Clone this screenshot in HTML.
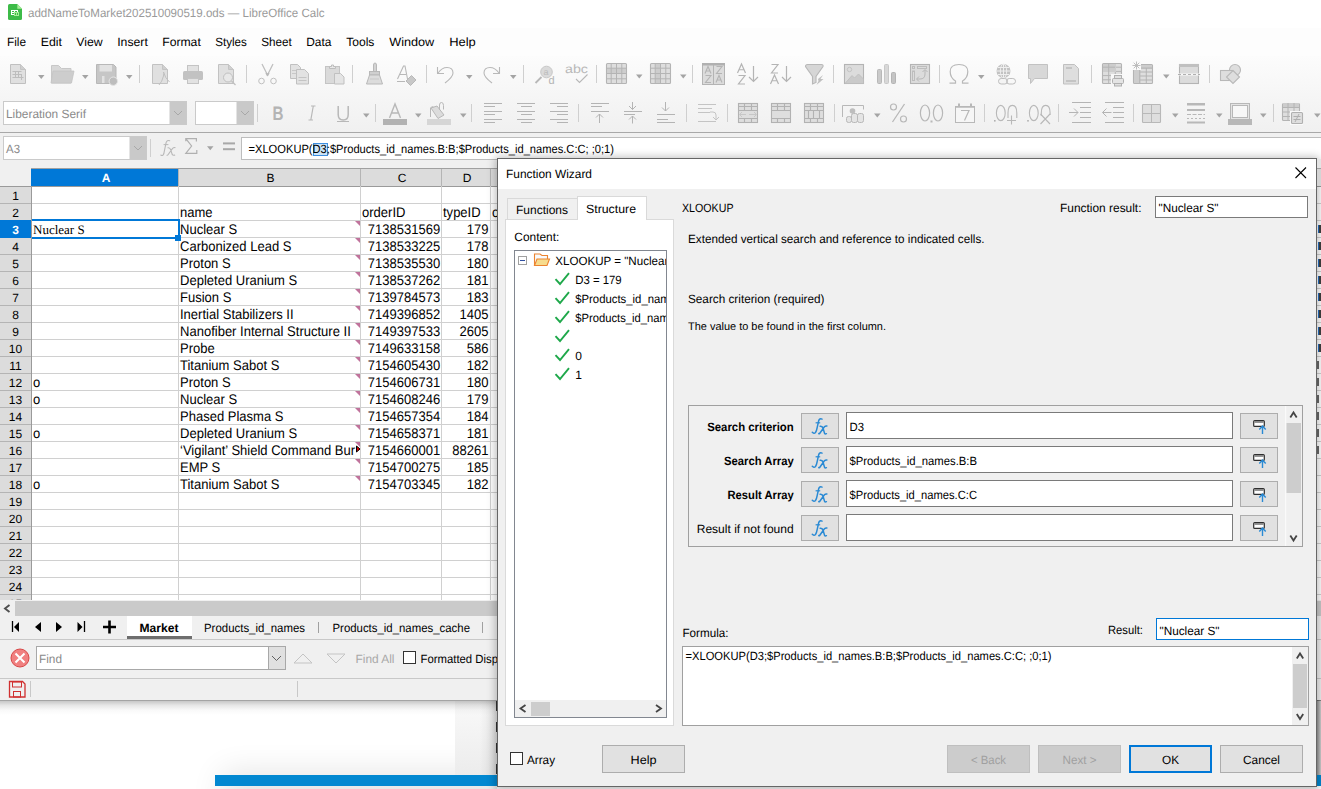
<!DOCTYPE html>
<html><head><meta charset="utf-8"><title>LibreOffice Calc - Function Wizard</title>
<style>html,body{margin:0;padding:0;width:1321px;height:789px;overflow:hidden;background:#fff}svg{display:block}</style>
</head><body><svg width="1321" height="789" viewBox="0 0 1321 789" text-rendering="geometricPrecision"><rect x="0" y="0" width="1321" height="789" fill="#ffffff" />
<rect x="0" y="0" width="1321" height="28" fill="#ffffff" />
<path d="M8 5.5 Q8 4 9.5 4 L17.3 4 L22 8.7 L22 18.5 Q22 20 20.5 20 L9.5 20 Q8 20 8 18.5 Z" fill="#3dbb48"/>
<path d="M17.3 4 L22 8.7 L17.3 8.7 Z" fill="#a8ee98"/>
<rect x="11" y="10" width="7" height="5" fill="#ffffff"/><rect x="12" y="11" width="2" height="1" fill="#3dbb48"/><rect x="15" y="11" width="2" height="1" fill="#3dbb48"/><rect x="12" y="13" width="2" height="1" fill="#3dbb48"/>
<rect x="14" y="12" width="5" height="4" fill="#a8ee98"/><rect x="15" y="13" width="1" height="2" fill="#3dbb48"/><rect x="17" y="13" width="1" height="2" fill="#3dbb48"/>
<text x="28" y="17" font-family="Liberation Sans" font-size="12" fill="#9a9a9a" textLength="296.5" lengthAdjust="spacingAndGlyphs" >addNameToMarket202510090519.ods — LibreOffice Calc</text>
<rect x="0" y="28" width="1321" height="28" fill="#fdfdfd" />
<text x="6.9" y="46" font-family="Liberation Sans" font-size="12" fill="#000" textLength="19.1" lengthAdjust="spacingAndGlyphs" >File</text>
<text x="40.800000000000004" y="46" font-family="Liberation Sans" font-size="12" fill="#000" textLength="21.200000000000003" lengthAdjust="spacingAndGlyphs" >Edit</text>
<text x="76.2" y="46" font-family="Liberation Sans" font-size="12" fill="#000" textLength="26.400000000000002" lengthAdjust="spacingAndGlyphs" >View</text>
<text x="117.2" y="46" font-family="Liberation Sans" font-size="12" fill="#000" textLength="30.6" lengthAdjust="spacingAndGlyphs" >Insert</text>
<text x="162.2" y="46" font-family="Liberation Sans" font-size="12" fill="#000" textLength="38.6" lengthAdjust="spacingAndGlyphs" >Format</text>
<text x="215.2" y="46" font-family="Liberation Sans" font-size="12" fill="#000" textLength="31.6" lengthAdjust="spacingAndGlyphs" >Styles</text>
<text x="261.2" y="46" font-family="Liberation Sans" font-size="12" fill="#000" textLength="30.6" lengthAdjust="spacingAndGlyphs" >Sheet</text>
<text x="306.2" y="46" font-family="Liberation Sans" font-size="12" fill="#000" textLength="25.200000000000003" lengthAdjust="spacingAndGlyphs" >Data</text>
<text x="346.2" y="46" font-family="Liberation Sans" font-size="12" fill="#000" textLength="28.200000000000003" lengthAdjust="spacingAndGlyphs" >Tools</text>
<text x="389.2" y="46" font-family="Liberation Sans" font-size="12" fill="#000" textLength="45.1" lengthAdjust="spacingAndGlyphs" >Window</text>
<text x="449.2" y="46" font-family="Liberation Sans" font-size="12" fill="#000" textLength="26.6" lengthAdjust="spacingAndGlyphs" >Help</text>
<defs><linearGradient id="tbg" x1="0" y1="0" x2="0" y2="1"><stop offset="0" stop-color="#fcfcfc"/><stop offset="1" stop-color="#f0f0f0"/></linearGradient></defs>
<rect x="0" y="56" width="1321" height="77" fill="url(#tbg)" />
<rect x="0" y="132" width="1321" height="1" fill="#a8a8a8"/>
<rect x="0" y="133" width="1321" height="35" fill="#f0f0f0" />
<path d="M10.5 64.5 h10 l5 5 v14 h-15 z" fill="#e0e0e0" stroke="#c0c0c0"/><path d="M20.5 64.5 v5 h5" fill="#cfcfcf" stroke="#c4c4c4"/>
<path d="M12.5 71.5 h9 M12.5 74.5 h9 M12.5 77.5 h11 M15.5 71 v7 M18.5 71 v7 M21.5 74 v6" stroke="#bdbdbd" stroke-width="1"/>
<path d="M38 75 l6.5 0 l-3.25 4 z" fill="#a4a4a4"/>
<path d="M51.5 65.5 h7 l3 3 h9.5 v14.5 h-19.5 z" fill="#d8d8d8" stroke="#c8c8c8"/>
<path d="M51 83 l2 -12 h21 l-2.5 12 z" fill="#cdcdcd" stroke="#c4c4c4" stroke-width="0.8"/>
<path d="M82 75 l6.5 0 l-3.25 4 z" fill="#a4a4a4"/>
<path d="M96.5 64.5 h17 l2.5 2.5 v16.5 h-19.5 z" fill="#c6c6c6" stroke="#b8b8b8"/>
<rect x="99.5" y="65" width="12.5" height="6.5" fill="#e2e2e2"/>
<rect x="102" y="76" width="2.5" height="7" fill="#e2e2e2"/>
<circle cx="113.3" cy="81.2" r="4.2" fill="#bdbdbd" stroke="#e6e6e6" stroke-width="1"/>
<path d="M126 75 l6.5 0 l-3.25 4 z" fill="#a4a4a4"/>
<rect x="139" y="65" width="1" height="18" fill="#cfcfcf"/>
<path d="M152.5 64.5 h10 l5 5 v14 h-15 z" fill="#e0e0e0" stroke="#c2c2c2"/><path d="M162.5 64.5 v5 h5" fill="#d0d0d0" stroke="#c4c4c4"/>
<path d="M159 85 q3 -3 4.5 -9 q0.5 -3 0 -4 q1.5 6 6 10" fill="none" stroke="#c0c0c0" stroke-width="1"/>
<rect x="187.5" y="65.5" width="11" height="6" fill="#e2e2e2" stroke="#c4c4c4"/>
<rect x="183" y="71" width="20" height="9" rx="1.5" fill="#c2c2c2"/>
<rect x="187.5" y="78.5" width="11" height="5" fill="#e2e2e2" stroke="#c4c4c4"/>
<path d="M218.5 64.5 h10 l5 5 v14 h-15 z" fill="#e0e0e0" stroke="#c2c2c2"/><path d="M228.5 64.5 v5 h5" fill="#d0d0d0" stroke="#c4c4c4"/>
<circle cx="228" cy="77.5" r="4.5" fill="#e8e8e8" stroke="#c0c0c0"/>
<path d="M231.5 81 l4 4" stroke="#c0c0c0" stroke-width="1.2"/>
<rect x="246" y="65" width="1" height="18" fill="#cfcfcf"/>
<path d="M262 64 l6 12 M273 64 l-6 12" stroke="#c0c0c0" stroke-width="1.3" fill="none"/><path d="M266 73 l1.5 2 l1.5 -2" stroke="#b8b8b8" stroke-width="1.5" fill="none"/>
<circle cx="261.5" cy="81" r="2.8" fill="none" stroke="#c0c0c0"/><circle cx="273.5" cy="81" r="2.8" fill="none" stroke="#c0c0c0"/>
<path d="M290.5 64.5 h7 l3 3 v11 h-10 z" fill="#e2e2e2" stroke="#c0c0c0"/><path d="M292 70.5 h5 M292 73.5 h5" stroke="#c8c8c8"/>
<path d="M296.5 69.5 h8 l4 4 v10.5 h-12 z" fill="#e2e2e2" stroke="#c0c0c0"/><path d="M298.5 77.5 h8 M298.5 80.5 h8" stroke="#c4c4c4"/>
<rect x="325.5" y="66.5" width="14" height="17" fill="#dadada" stroke="#c4c4c4"/>
<path d="M329.5 68.5 v-2 h2 v-1.5 h2 v1.5 h2 v2 z" fill="#e8e8e8" stroke="#bdbdbd"/>
<path d="M334.5 73.5 h6 l3.5 3.5 v7 h-9.5 z" fill="#e4e4e4" stroke="#c0c0c0"/>
<rect x="352" y="65" width="1" height="18" fill="#cfcfcf"/>
<path d="M373.5 72 v-7 q0 -2 1.5 -2 q1.5 0 1.5 2 v7" fill="#d4d4d4" stroke="#b8b8b8"/>
<rect x="369.5" y="71.5" width="10" height="3.5" fill="#cfcfcf" stroke="#b8b8b8"/><path d="M369.5 75 l-3 9 h16 l-3 -9 z" fill="#dcdcdc" stroke="#b8b8b8"/><path d="M370 79 h9" stroke="#c8c8c8"/>
<path d="M397.5 79 l6 -13 h1.5 l2.5 13 M400 74.5 h6" fill="none" stroke="#b8b8b8" stroke-width="1.1"/>
<path d="M406 81 l5.5 -5.5 l4.5 4.5 l-5.5 5.5 z" fill="#c8c8c8" stroke="#b8b8b8"/>
<rect x="397" y="81" width="8" height="1" fill="#b8b8b8"/>
<rect x="426" y="65" width="1" height="18" fill="#cfcfcf"/>
<path d="M437.5 67 v6.5 h6.5" fill="none" stroke="#b8b8b8" stroke-width="1.1"/><path d="M438 73 q4 -5.5 9 -5.5 q6 0 6 5.5 q0 4 -8 10" fill="none" stroke="#b8b8b8" stroke-width="1.1"/>
<path d="M466 75 l6.5 0 l-3.25 4 z" fill="#a4a4a4"/>
<path d="M499.5 67 v6.5 h-6.5" fill="none" stroke="#b8b8b8" stroke-width="1.1"/><path d="M499 73 q-4 -5.5 -9 -5.5 q-6 0 -6 5.5 q0 4 8 10" fill="none" stroke="#b8b8b8" stroke-width="1.1"/>
<path d="M510 75 l6.5 0 l-3.25 4 z" fill="#a4a4a4"/>
<rect x="523" y="65" width="1" height="18" fill="#cfcfcf"/>
<circle cx="546.5" cy="72" r="5.8" fill="#dadada" stroke="#c8c8c8"/><path d="M535.5 83 l6 -6" stroke="#b8b8b8" stroke-width="1.8"/>
<text x="543.5" y="75" font-family="Liberation Sans" font-size="9" fill="#bcbcbc">a</text><text x="548.5" y="84" font-family="Liberation Sans" font-size="11" fill="#b4b4b4">d</text>
<text x="565" y="73" font-family="Liberation Sans" font-size="12" fill="#b8b8b8" textLength="23" lengthAdjust="spacingAndGlyphs">abc</text><path d="M576 79 l3.5 3.5 l8 -8" fill="none" stroke="#b8b8b8" stroke-width="1.1"/>
<rect x="596" y="65" width="1" height="18" fill="#cfcfcf"/>
<rect x="606.5" y="63.5" width="20" height="20" rx="1" fill="#dedede" stroke="#b4b4b4" stroke-width="1.1"/>
<rect x="607" y="68.2" width="19" height="5.2" fill="#cdcdcd"/>
<path d="M606 68.2 h21" stroke="#b4b4b4" stroke-width="1"/>
<path d="M606 73.5 h21" stroke="#b4b4b4" stroke-width="1"/>
<path d="M606 78.8 h21" stroke="#b4b4b4" stroke-width="1"/>
<path d="M611.2 63 v21" stroke="#b4b4b4" stroke-width="1"/>
<path d="M616.5 63 v21" stroke="#b4b4b4" stroke-width="1"/>
<path d="M621.8 63 v21" stroke="#b4b4b4" stroke-width="1"/>
<path d="M636 74.5 l6.5 0 l-3.25 4 z" fill="#a4a4a4"/>
<rect x="650.5" y="63.5" width="20" height="20" rx="1" fill="#dedede" stroke="#b4b4b4" stroke-width="1.1"/>
<rect x="655.2" y="64" width="5.2" height="19" fill="#cdcdcd"/>
<path d="M650 68.2 h21" stroke="#b4b4b4" stroke-width="1"/>
<path d="M650 73.5 h21" stroke="#b4b4b4" stroke-width="1"/>
<path d="M650 78.8 h21" stroke="#b4b4b4" stroke-width="1"/>
<path d="M655.2 63 v21" stroke="#b4b4b4" stroke-width="1"/>
<path d="M660.5 63 v21" stroke="#b4b4b4" stroke-width="1"/>
<path d="M665.8 63 v21" stroke="#b4b4b4" stroke-width="1"/>
<path d="M680 74.5 l6.5 0 l-3.25 4 z" fill="#a4a4a4"/>
<rect x="692" y="65" width="1" height="18" fill="#cfcfcf"/>
<rect x="702.5" y="63.5" width="22" height="21" fill="#dcdcdc" stroke="#b4b4b4"/><rect x="702" y="63" width="23" height="2.5" fill="#b0b0b0"/><path d="M713.5 65 v20" stroke="#b4b4b4"/>
<path d="M705 73.5 L708.0 66.5 L711 73.5 M706.32 70.98 h3.3600000000000003" fill="none" stroke="#b4b4b4" stroke-width="1.1"/>
<path d="M705.5 75.5 h5.5 L705.5 82.5 h5.5" fill="none" stroke="#b4b4b4" stroke-width="1.1"/>
<path d="M716.5 66.5 h5.5 L716.5 73.5 h5.5" fill="none" stroke="#b4b4b4" stroke-width="1.1"/>
<path d="M716 82.5 L719.0 75.5 L722 82.5 M717.32 79.98 h3.3600000000000003" fill="none" stroke="#b4b4b4" stroke-width="1.1"/>
<path d="M737.5 73 L741.5 64 L745.5 73 M739.26 69.76 h4.48" fill="none" stroke="#b4b4b4" stroke-width="1.2"/>
<path d="M738.5 75.5 h6.5 L738.5 84.0 h6.5" fill="none" stroke="#b4b4b4" stroke-width="1.2"/>
<path d="M753.5 66 v15.5 M749 77 l4.5 4.5 l4.5 -4.5" fill="none" stroke="#b4b4b4" stroke-width="1.2"/>
<path d="M771.5 64.5 h6.5 L771.5 73.0 h6.5" fill="none" stroke="#b4b4b4" stroke-width="1.2"/>
<path d="M770.5 84 L774.5 75 L778.5 84 M772.26 80.76 h4.48" fill="none" stroke="#b4b4b4" stroke-width="1.2"/>
<path d="M786.5 66 v15.5 M782 77 l4.5 4.5 l4.5 -4.5" fill="none" stroke="#b4b4b4" stroke-width="1.2"/>
<path d="M805.5 66.5 q0 -2 2 -2 h14 q2 0 1.5 2 l-7 10 v6 l-3.5 1.5 v-7.5 z" fill="#d6d6d6" stroke="#b8b8b8" stroke-width="1.1"/><path d="M818 79 l5 -4 l-2.5 4 h3 l-7 6 l2 -4 z" fill="#c0c0c0"/>
<rect x="833" y="65" width="1" height="18" fill="#cfcfcf"/>
<rect x="844.5" y="64.5" width="19" height="19" fill="#dcdcdc" stroke="#b4b4b4" stroke-width="1.1"/><circle cx="849.5" cy="69.5" r="2.2" fill="none" stroke="#c4c4c4"/><path d="M845 83.5 l7 -8 l2.5 2.5 l4 -4 l5 5 v4.5 z" fill="#cacaca" stroke="#bdbdbd" stroke-width="0.8"/>
<rect x="877.5" y="69.5" width="4" height="14" rx="1" fill="#cacaca" stroke="#b8b8b8"/><rect x="884.5" y="64.5" width="4" height="19" rx="1" fill="#d8d8d8" stroke="#c8c8c8"/><rect x="891.5" y="72.5" width="4" height="11" rx="1" fill="#c4c4c4" stroke="#b4b4b4"/>
<rect x="910.5" y="64.5" width="19" height="19" fill="#dcdcdc" stroke="#b4b4b4" stroke-width="1.1"/><rect x="912.5" y="66.5" width="2" height="2" fill="none" stroke="#bdbdbd"/><rect x="917.5" y="66.5" width="9" height="2" fill="none" stroke="#bdbdbd"/><rect x="912.5" y="71" width="2" height="9.5" fill="none" stroke="#bdbdbd"/>
<path d="M917 79 h3 q5 0 5 -5 v-4 M922.5 72 l2.5 -2.5 l2.5 2.5 M919 76.5 l-2.5 2.5 l2.5 2.5" fill="none" stroke="#b8b8b8" stroke-width="1"/>
<rect x="939" y="65" width="1" height="18" fill="#cfcfcf"/>
<path d="M949.5 83.2 h6 v-2.2 q-5.3 -3.2 -5.3 -9.5 q0 -7 8.8 -7 q8.8 0 8.8 7 q0 6.3 -5.3 9.5 v2.2 h6" fill="none" stroke="#b8b8b8" stroke-width="1.2"/>
<path d="M978 75 l6.5 0 l-3.25 4 z" fill="#a4a4a4"/>
<circle cx="1003.5" cy="71" r="7" fill="#c2c2c2"/><path d="M996.5 71 h14 M1003.5 64 v14 M998 67.5 h11 M998 74.5 h11" stroke="#efefef" stroke-width="1"/><ellipse cx="1003.5" cy="71" rx="3.2" ry="7" fill="none" stroke="#efefef"/>
<rect x="998.5" y="78.5" width="9" height="5.5" rx="2.7" fill="#f4f4f4" stroke="#bdbdbd"/><rect x="1006.5" y="78.5" width="9" height="5.5" rx="2.7" fill="none" stroke="#bdbdbd"/>
<path d="M1028.5 64.5 h19 v14 h-13 l-4 5 v-5 h-2 z" fill="#d8d8d8" stroke="#c2c2c2"/>
<path d="M1063.5 64.5 h11 l4 4 v15.5 h-15 z" fill="#dedede" stroke="#c0c0c0"/><rect x="1066" y="67" width="6" height="2" fill="#c4c4c4"/><rect x="1066" y="80" width="10" height="2" fill="#c4c4c4"/>
<rect x="1091" y="65" width="1" height="18" fill="#cfcfcf"/>
<rect x="1102.5" y="63.5" width="19" height="20" rx="1" fill="#dedede" stroke="#b4b4b4" stroke-width="1.1"/>
<path d="M1102 67.2 h20" stroke="#b4b4b4" stroke-width="1"/>
<path d="M1102 71.4 h20" stroke="#b4b4b4" stroke-width="1"/>
<path d="M1102 75.6 h20" stroke="#b4b4b4" stroke-width="1"/>
<path d="M1102 79.8 h20" stroke="#b4b4b4" stroke-width="1"/>
<path d="M1108.7 63 v21" stroke="#b4b4b4" stroke-width="1"/>
<path d="M1115.3 63 v21" stroke="#b4b4b4" stroke-width="1"/>
<rect x="1103" y="64" width="13" height="8" fill="#cdcdcd"/><path d="M1102 67.2 h13 M1108.7 63 v9" stroke="#b4b4b4"/>
<rect x="1111" y="74" width="13" height="13" fill="#f8f8f8"/><rect x="1114.5" y="75.5" width="7" height="3" fill="#e0e0e0" stroke="#b0b0b0"/><rect x="1112.5" y="78.5" width="11" height="5" rx="1" fill="#e4e4e4" stroke="#b0b0b0"/><rect x="1114.5" y="83.5" width="7" height="2.5" fill="#e0e0e0" stroke="#b0b0b0"/>
<rect x="1133.5" y="64.5" width="19" height="19" rx="1" fill="#dedede" stroke="#b4b4b4" stroke-width="1.1"/>
<path d="M1133 68.0 h20" stroke="#b4b4b4" stroke-width="1"/>
<path d="M1133 72.0 h20" stroke="#b4b4b4" stroke-width="1"/>
<path d="M1133 76.0 h20" stroke="#b4b4b4" stroke-width="1"/>
<path d="M1133 80.0 h20" stroke="#b4b4b4" stroke-width="1"/>
<path d="M1139.7 64 v20" stroke="#b4b4b4" stroke-width="1"/>
<path d="M1146.3 64 v20" stroke="#b4b4b4" stroke-width="1"/>
<rect x="1134" y="65" width="18" height="3" fill="#cdcdcd"/><rect x="1134" y="65" width="6" height="18" fill="#cdcdcd"/><path d="M1133 68 h20 M1139.7 64 v20" stroke="#b4b4b4"/>
<rect x="1132" y="61" width="9" height="9" fill="#fafafa"/><path d="M1136.5 61.5 v8 M1132.5 65.5 h8 M1133.7 62.7 l5.6 5.6 M1139.3 62.7 l-5.6 5.6" stroke="#b8b8b8" stroke-width="0.9"/>
<path d="M1163 74.5 l6.5 0 l-3.25 4 z" fill="#a4a4a4"/>
<rect x="1179.5" y="64.5" width="19" height="19" fill="#dcdcdc" stroke="#b4b4b4" stroke-width="1.1"/><rect x="1179" y="64" width="20" height="3" fill="#c0c0c0"/><rect x="1178" y="73.5" width="22" height="2" fill="#f8f8f8"/><path d="M1178 74.5 h22" stroke="#b0b0b0" stroke-dasharray="3 2"/>
<rect x="1209" y="65" width="1" height="18" fill="#cfcfcf"/>
<circle cx="1235" cy="70" r="5.5" fill="#dedede" stroke="#b8b8b8" stroke-width="1.1"/><rect x="1220.5" y="70.5" width="12" height="10" fill="#dedede" stroke="#b8b8b8" stroke-width="1.1"/><path d="M1233 70.5 l6.5 6.5 l-6.5 6.5 l-6.5 -6.5 z" fill="#dedede" stroke="#b8b8b8" stroke-width="1.1"/>
<rect x="3.5" y="101.5" width="183" height="23" fill="#ffffff" stroke="#cacaca" stroke-width="1"/>
<rect x="169.5" y="102" width="17" height="22" fill="#c9c9c9" />
<path d="M174 111 l4 4 l4 -4" fill="none" stroke="#a8a8a8" stroke-width="1"/>
<text x="6" y="118" font-family="Liberation Sans" font-size="12" fill="#8a8a8a" textLength="80" lengthAdjust="spacingAndGlyphs" >Liberation Serif</text>
<rect x="195.5" y="101.5" width="58" height="23" fill="#ffffff" stroke="#cacaca" stroke-width="1"/>
<rect x="236.5" y="102" width="17" height="22" fill="#c9c9c9" />
<path d="M241 111 l4 4 l4 -4" fill="none" stroke="#a8a8a8" stroke-width="1"/>
<rect x="257" y="104" width="1" height="18" fill="#cfcfcf"/>
<text x="272.5" y="120.2" font-family="Liberation Sans" font-size="19.5" fill="#b4b4b4" font-weight="700" textLength="11" lengthAdjust="spacingAndGlyphs" >B</text>
<path d="M311 106 h4.5 M308.5 120 h4.5 M313.3 106 l-2.5 14" fill="none" stroke="#b8b8b8" stroke-width="1.2"/>
<path d="M338.2 106 v8.5 q0 5.5 5 5.5 q5 0 5 -5.5 v-8.5" fill="none" stroke="#b8b8b8" stroke-width="1.5"/>
<rect x="337" y="121" width="12" height="1" fill="#b8b8b8"/>
<path d="M363 113.5 l6.5 0 l-3.25 4 z" fill="#a4a4a4"/>
<rect x="375" y="104" width="1" height="18" fill="#cfcfcf"/>
<path d="M389.5 118 l5.5 -14 l5.5 14 M391.5 113 h7" fill="none" stroke="#b8b8b8" stroke-width="1.4"/>
<rect x="383" y="119" width="24" height="6" fill="#b2b2b2" />
<path d="M415 113.5 l6.5 0 l-3.25 4 z" fill="#a4a4a4"/>
<path d="M431 108 l6 -2 l7 9 l-6 3.5 z" fill="#dcdcdc" stroke="#b8b8b8"/><path d="M430.5 117 v-9 q1 -2 3 -1" fill="none" stroke="#b8b8b8"/><path d="M439.5 110 v-5 q0 -2.5 2 -2.5 q2 0 2 3 v4" fill="none" stroke="#b8b8b8"/>
<rect x="427" y="119" width="24" height="6" fill="#d6d6d6" />
<path d="M460 113.5 l6.5 0 l-3.25 4 z" fill="#a4a4a4"/>
<rect x="471" y="104" width="1" height="18" fill="#cfcfcf"/>
<rect x="484" y="103" width="18" height="1" fill="#b4b4b4"/>
<rect x="484" y="106" width="11" height="1" fill="#b4b4b4"/>
<rect x="484" y="111" width="18" height="1" fill="#b4b4b4"/>
<rect x="484" y="114" width="11" height="1" fill="#b4b4b4"/>
<rect x="484" y="119" width="18" height="1" fill="#b4b4b4"/>
<rect x="484" y="122" width="11" height="1" fill="#b4b4b4"/>
<rect x="517" y="103" width="18" height="1" fill="#b4b4b4"/>
<rect x="521" y="106" width="11" height="1" fill="#b4b4b4"/>
<rect x="517" y="111" width="18" height="1" fill="#b4b4b4"/>
<rect x="521" y="114" width="11" height="1" fill="#b4b4b4"/>
<rect x="517" y="119" width="18" height="1" fill="#b4b4b4"/>
<rect x="521" y="122" width="11" height="1" fill="#b4b4b4"/>
<rect x="550" y="103" width="18" height="1" fill="#b4b4b4"/>
<rect x="557" y="106" width="11" height="1" fill="#b4b4b4"/>
<rect x="550" y="111" width="18" height="1" fill="#b4b4b4"/>
<rect x="557" y="114" width="11" height="1" fill="#b4b4b4"/>
<rect x="550" y="119" width="18" height="1" fill="#b4b4b4"/>
<rect x="557" y="122" width="11" height="1" fill="#b4b4b4"/>
<rect x="578" y="104" width="1" height="18" fill="#cfcfcf"/>
<rect x="591" y="103" width="18" height="1" fill="#b4b4b4"/>
<rect x="591" y="106" width="11" height="1" fill="#b4b4b4"/>
<rect x="591" y="111" width="18" height="1" fill="#b4b4b4"/>
<path d="M599.5 123 v-9 M596 117.5 l3.5 -3.5 l3.5 3.5" fill="none" stroke="#b4b4b4"/>
<rect x="624" y="111" width="18" height="1" fill="#b4b4b4"/>
<rect x="624" y="114" width="11" height="1" fill="#b4b4b4"/>
<path d="M632.5 102 v7.5 M629 106 l3.5 3.5 l3.5 -3.5 M632.5 123.5 v-7.5 M629 119.5 l3.5 -3.5 l3.5 3.5" fill="none" stroke="#b4b4b4"/>
<rect x="657" y="114" width="18" height="1" fill="#b4b4b4"/>
<rect x="657" y="119" width="11" height="1" fill="#b4b4b4"/>
<rect x="657" y="122" width="18" height="1" fill="#b4b4b4"/>
<path d="M665.5 102 v9 M662 107.5 l3.5 3.5 l3.5 -3.5" fill="none" stroke="#b4b4b4"/>
<rect x="686" y="104" width="1" height="18" fill="#cfcfcf"/>
<rect x="698" y="104" width="18" height="1" fill="#c4c4c4"/>
<rect x="698" y="108" width="14" height="1" fill="#c4c4c4"/>
<rect x="698" y="112" width="12" height="1" fill="#c4c4c4"/>
<rect x="698" y="121" width="18" height="1" fill="#c4c4c4"/>
<path d="M710 112 h3 q3 0 3 3 v4 M713 117 l3 3 l3 -3" fill="none" stroke="#c4c4c4"/>
<rect x="727" y="104" width="1" height="18" fill="#cfcfcf"/>
<rect x="738.5" y="103.5" width="19" height="19" fill="#dedede" stroke="#b2b2b2" stroke-width="1.1"/>
<path d="M738 106.5 h20 M738 110.5 h20 M738 118.5 h20" stroke="#b2b2b2" stroke-width="1.1"/>
<path d="M744.5 103 v7.5 M751.5 103 v7.5 M744.5 118.5 v4.5 M751.5 118.5 v4.5" stroke="#b2b2b2" stroke-width="1.1"/>
<path d="M740 114.5 h6 M749 114.5 h7 M742 112 l-2.5 2.5 l2.5 2.5 M754 112 l2.5 2.5 l-2.5 2.5" fill="none" stroke="#c4c4c4" stroke-width="0.9"/>
<rect x="771.5" y="103.5" width="19" height="19" fill="#dedede" stroke="#b2b2b2" stroke-width="1.1"/>
<path d="M771 106.5 h20 M771 110.5 h20 M771 118.5 h20" stroke="#b2b2b2" stroke-width="1.1"/>
<path d="M777.5 103 v7.5 M784.5 103 v7.5 M777.5 118.5 v4.5 M784.5 118.5 v4.5" stroke="#b2b2b2" stroke-width="1.1"/>
<rect x="804.5" y="103.5" width="19" height="19" fill="#dedede" stroke="#b2b2b2" stroke-width="1.1"/>
<path d="M804 106.5 h20 M804 110.5 h20 M804 118.5 h20" stroke="#b2b2b2" stroke-width="1.1"/>
<path d="M810.5 103 v7.5 M817.5 103 v7.5 M810.5 118.5 v4.5 M817.5 118.5 v4.5" stroke="#b2b2b2" stroke-width="1.1"/>
<path d="M808.5 110.5 v8 M813.5 110.5 v8 M819.5 110.5 v8" stroke="#b2b2b2" stroke-width="1.1"/>
<rect x="834" y="104" width="1" height="18" fill="#cfcfcf"/>
<path d="M842.5 117 v-11.5 h21 v4" fill="none" stroke="#b8b8b8"/><circle cx="852.5" cy="111" r="2.8" fill="#bdbdbd"/>
<rect x="846.5" y="116.5" width="5" height="6" rx="2" fill="#e4e4e4" stroke="#b8b8b8"/><rect x="851.5" y="113.5" width="6" height="9" rx="2" fill="#e4e4e4" stroke="#b8b8b8"/><rect x="857.5" y="113.5" width="6" height="9" rx="2" fill="#e4e4e4" stroke="#b8b8b8"/>
<path d="M874 113.5 l6.5 0 l-3.25 4 z" fill="#a4a4a4"/>
<path d="M904.5 104 l-12 18" stroke="#b8b8b8" stroke-width="1.3"/><circle cx="893.5" cy="107" r="3" fill="none" stroke="#b8b8b8" stroke-width="1.2"/><circle cx="903.5" cy="119" r="3" fill="none" stroke="#b8b8b8" stroke-width="1.2"/>
<ellipse cx="925" cy="113" rx="4.6" ry="8" fill="none" stroke="#b8b8b8" stroke-width="1.2"/><ellipse cx="938" cy="113" rx="4.6" ry="8" fill="none" stroke="#b8b8b8" stroke-width="1.2"/><rect x="930.5" y="120.5" width="2" height="2" fill="#b8b8b8"/>
<rect x="955.5" y="106.5" width="19" height="16" fill="#f6f6f6" stroke="#b8b8b8"/><path d="M955 107 h20" stroke="#b8b8b8" stroke-width="1.5"/><rect x="958" y="103.5" width="2" height="3" fill="#b8b8b8"/><rect x="970" y="103.5" width="2" height="3" fill="#b8b8b8"/>
<path d="M961 110.5 h8 l-4.5 10" fill="none" stroke="#b8b8b8" stroke-width="1.2"/>
<rect x="984" y="104" width="1" height="18" fill="#cfcfcf"/>
<rect x="994" y="120" width="1.6" height="1.6" fill="#b0b0b0"/><ellipse cx="1000.8" cy="113" rx="4.4" ry="7.6" fill="none" stroke="#b8b8b8" stroke-width="1.1"/><path d="M1008 118 v-5 q0 -7.6 4.4 -7.6 q4.4 0 4.4 7.6 v5" fill="none" stroke="#b8b8b8" stroke-width="1.1"/><path d="M1011.5 115.5 v9 M1007 120.5 h9" stroke="#b8b8b8" stroke-width="1.1"/>
<rect x="1027.2" y="120" width="1.6" height="1.6" fill="#b0b0b0"/><ellipse cx="1033.8" cy="113" rx="4.4" ry="7.6" fill="none" stroke="#b8b8b8" stroke-width="1.1"/><path d="M1041.3 116 v-3 q0 -7.6 4.4 -7.6 q4.4 0 4.4 7.6 v2" fill="none" stroke="#b8b8b8" stroke-width="1.1"/><path d="M1040.5 114 l9.5 10 M1050 114 l-9.5 10" stroke="#b8b8b8" stroke-width="1.1"/>
<rect x="1058" y="104" width="1" height="18" fill="#cfcfcf"/>
<rect x="1072" y="102" width="19" height="1" fill="#b4b4b4"/>
<rect x="1080" y="107" width="11" height="1" fill="#b4b4b4"/>
<rect x="1080" y="112" width="11" height="1" fill="#b4b4b4"/>
<rect x="1080" y="117" width="11" height="1" fill="#b4b4b4"/>
<rect x="1072" y="122" width="19" height="1" fill="#b4b4b4"/>
<path d="M1069 112.5 h9 M1074 108.5 l4 4 l-4 4" fill="none" stroke="#b4b4b4"/>
<rect x="1105" y="102" width="19" height="1" fill="#b4b4b4"/>
<rect x="1113" y="107" width="11" height="1" fill="#b4b4b4"/>
<rect x="1113" y="112" width="11" height="1" fill="#b4b4b4"/>
<rect x="1113" y="117" width="11" height="1" fill="#b4b4b4"/>
<rect x="1105" y="122" width="19" height="1" fill="#b4b4b4"/>
<path d="M1102.5 112.5 h9 M1106.5 108.5 l-4 4 l4 4" fill="none" stroke="#b4b4b4"/>
<rect x="1133" y="104" width="1" height="18" fill="#cfcfcf"/>
<rect x="1142.5" y="104.5" width="18" height="18" rx="0.8" fill="#dedede" stroke="#b8b8b8" stroke-width="1.1"/><path d="M1151.5 104 v19 M1142 113.5 h19" stroke="#b8b8b8"/>
<path d="M1172 113.5 l6.5 0 l-3.25 4 z" fill="#a4a4a4"/>
<rect x="1187" y="103" width="18" height="2.5" fill="#b8b8b8" />
<rect x="1187" y="109" width="18" height="2" fill="#b8b8b8"/>
<path d="M1187 114.5 h18" stroke="#b8b8b8" stroke-dasharray="4 1.5"/><path d="M1187 118.5 h18" stroke="#b8b8b8" stroke-dasharray="2 2"/>
<rect x="1187" y="121.5" width="18" height="2" fill="#b8b8b8" />
<path d="M1216 113.5 l6.5 0 l-3.25 4 z" fill="#a4a4a4"/>
<rect x="1230.5" y="103.5" width="19" height="16" fill="#e4e4e4" stroke="#b8b8b8"/><rect x="1232.5" y="105.5" width="15" height="12" fill="#f8f8f8" stroke="#b8b8b8"/>
<rect x="1228" y="119" width="24" height="6" fill="#b8b8b8" />
<path d="M1260 113.5 l6.5 0 l-3.25 4 z" fill="#a4a4a4"/>
<rect x="1273" y="104" width="1" height="18" fill="#cfcfcf"/>
<rect x="1282.5" y="103.5" width="17" height="17" rx="1" fill="#dedede" stroke="#b4b4b4" stroke-width="1.1"/>
<rect x="1283" y="103.0" width="16" height="4.5" fill="#cdcdcd"/>
<path d="M1282 107.5 h18" stroke="#b4b4b4" stroke-width="1"/>
<path d="M1282 112.0 h18" stroke="#b4b4b4" stroke-width="1"/>
<path d="M1282 116.5 h18" stroke="#b4b4b4" stroke-width="1"/>
<path d="M1288.0 103 v18" stroke="#b4b4b4" stroke-width="1"/>
<path d="M1294.0 103 v18" stroke="#b4b4b4" stroke-width="1"/>
<rect x="1290" y="111" width="13" height="14" fill="#fafafa"/><rect x="1291.5" y="112.5" width="11" height="11" rx="1" fill="#dedede" stroke="#b0b0b0" stroke-width="1.1"/><path d="M1293.5 116.5 h7 M1293.5 119.5 h7 M1299 114 l-4 8" stroke="#b0b0b0"/>
<path d="M1314 113.5 l6.5 0 l-3.25 4 z" fill="#a4a4a4"/>
<rect x="3.5" y="136.5" width="143" height="23" fill="#ffffff" stroke="#cacaca" stroke-width="1"/>
<rect x="129.5" y="137" width="17" height="22" fill="#c9c9c9" />
<path d="M134 146 l4 4 l4 -4" fill="none" stroke="#a8a8a8"/>
<text x="6" y="153" font-family="Liberation Sans" font-size="12" fill="#8a8a8a" textLength="14" lengthAdjust="spacingAndGlyphs" >A3</text>
<rect x="150" y="139" width="1" height="18" fill="#cfcfcf"/>
<path d="M160.8 155 q1.2 1 2.4 -0.2 q0.8 -1 1.3 -4.5 l1.6 -7.6 q0.8 -3 3.6 -2" fill="none" stroke="#b8b8b8" stroke-width="1.1" stroke-linecap="round"/><path d="M163.6 144.6 h4.8" stroke="#b8b8b8" stroke-width="1"/>
<path d="M168 147.8 q2 -0.4 2.8 2.4 l1.5 4.5 q0.6 0.8 2.4 0.4 M175 147.6 q-1.2 -0.3 -2.4 0.8 l-4.6 6.4 q-0.4 0.6 -1 0.4" fill="none" stroke="#b8b8b8" stroke-width="1.1" stroke-linecap="round"/>
<path d="M185.8 141.2 v-2.6 h10.6 v2.8 M186 138.8 l5.6 7.2 l-5.8 7.3 h11 v-3.2" fill="none" stroke="#b0b0b0" stroke-width="1.2"/>
<path d="M207 146.2 l6.5 0 l-3.25 4 z" fill="#a4a4a4"/>
<rect x="223" y="142.4" width="12" height="2" fill="#a8a8a8" />
<rect x="223" y="148.2" width="12" height="2" fill="#a8a8a8" />
<rect x="241.5" y="137.5" width="1089" height="22" fill="#ffffff" stroke="#bdbdbd" stroke-width="1"/>
<rect x="313.5" y="143.5" width="14" height="12" fill="#cce4f7" stroke="#3d8ee0"/>
<text x="248.5" y="152.6" font-family="Liberation Sans" font-size="12" fill="#000" textLength="365.5" lengthAdjust="spacingAndGlyphs" >=XLOOKUP(D3;$Products_id_names.B:B;$Products_id_names.C:C; ;0;1)</text>
<rect x="0" y="168" width="1321" height="432" fill="#ffffff" />
<rect x="0" y="168" width="31" height="19" fill="#f0f0f0" />
<rect x="31" y="168" width="1290" height="18" fill="#dcdcdc" />
<rect x="31" y="168" width="1290" height="1" fill="#a0a0a0"/>
<rect x="0" y="186" width="1321" height="1" fill="#9a9a9a"/>
<rect x="31" y="169" width="147" height="17" fill="#0078d7" />
<rect x="178" y="169" width="1" height="17" fill="#b4b4b4"/>
<text x="106.0" y="182" font-family="Liberation Sans" font-size="12" fill="#ffffff" font-weight="700" text-anchor="middle" >A</text>
<rect x="360" y="169" width="1" height="17" fill="#b4b4b4"/>
<text x="270.5" y="182" font-family="Liberation Sans" font-size="12" fill="#000" text-anchor="middle" >B</text>
<rect x="441" y="169" width="1" height="17" fill="#b4b4b4"/>
<text x="402.0" y="182" font-family="Liberation Sans" font-size="12" fill="#000" text-anchor="middle" >C</text>
<rect x="490" y="169" width="1" height="17" fill="#b4b4b4"/>
<text x="467.0" y="182" font-family="Liberation Sans" font-size="12" fill="#000" text-anchor="middle" >D</text>
<rect x="580" y="169" width="1" height="17" fill="#b4b4b4"/>
<text x="536.5" y="182" font-family="Liberation Sans" font-size="12" fill="#000" text-anchor="middle" >E</text>
<rect x="0" y="187" width="31" height="413" fill="#dcdcdc" />
<rect x="31" y="186" width="1" height="414" fill="#9a9a9a"/>
<rect x="0" y="203" width="31" height="1" fill="#b4b4b4"/>
<text x="15.5" y="200" font-family="Liberation Sans" font-size="12" fill="#000" text-anchor="middle" >1</text>
<rect x="0" y="220" width="31" height="1" fill="#b4b4b4"/>
<text x="15.5" y="217" font-family="Liberation Sans" font-size="12" fill="#000" text-anchor="middle" >2</text>
<rect x="0" y="220" width="31" height="18" fill="#0078d7" />
<text x="15.5" y="234" font-family="Liberation Sans" font-size="12" fill="#ffffff" font-weight="700" text-anchor="middle" >3</text>
<rect x="0" y="254" width="31" height="1" fill="#b4b4b4"/>
<text x="15.5" y="251" font-family="Liberation Sans" font-size="12" fill="#000" text-anchor="middle" >4</text>
<rect x="0" y="271" width="31" height="1" fill="#b4b4b4"/>
<text x="15.5" y="268" font-family="Liberation Sans" font-size="12" fill="#000" text-anchor="middle" >5</text>
<rect x="0" y="288" width="31" height="1" fill="#b4b4b4"/>
<text x="15.5" y="285" font-family="Liberation Sans" font-size="12" fill="#000" text-anchor="middle" >6</text>
<rect x="0" y="305" width="31" height="1" fill="#b4b4b4"/>
<text x="15.5" y="302" font-family="Liberation Sans" font-size="12" fill="#000" text-anchor="middle" >7</text>
<rect x="0" y="322" width="31" height="1" fill="#b4b4b4"/>
<text x="15.5" y="319" font-family="Liberation Sans" font-size="12" fill="#000" text-anchor="middle" >8</text>
<rect x="0" y="339" width="31" height="1" fill="#b4b4b4"/>
<text x="15.5" y="336" font-family="Liberation Sans" font-size="12" fill="#000" text-anchor="middle" >9</text>
<rect x="0" y="356" width="31" height="1" fill="#b4b4b4"/>
<text x="15.5" y="353" font-family="Liberation Sans" font-size="12" fill="#000" text-anchor="middle" >10</text>
<rect x="0" y="373" width="31" height="1" fill="#b4b4b4"/>
<text x="15.5" y="370" font-family="Liberation Sans" font-size="12" fill="#000" text-anchor="middle" >11</text>
<rect x="0" y="390" width="31" height="1" fill="#b4b4b4"/>
<text x="15.5" y="387" font-family="Liberation Sans" font-size="12" fill="#000" text-anchor="middle" >12</text>
<rect x="0" y="407" width="31" height="1" fill="#b4b4b4"/>
<text x="15.5" y="404" font-family="Liberation Sans" font-size="12" fill="#000" text-anchor="middle" >13</text>
<rect x="0" y="424" width="31" height="1" fill="#b4b4b4"/>
<text x="15.5" y="421" font-family="Liberation Sans" font-size="12" fill="#000" text-anchor="middle" >14</text>
<rect x="0" y="441" width="31" height="1" fill="#b4b4b4"/>
<text x="15.5" y="438" font-family="Liberation Sans" font-size="12" fill="#000" text-anchor="middle" >15</text>
<rect x="0" y="458" width="31" height="1" fill="#b4b4b4"/>
<text x="15.5" y="455" font-family="Liberation Sans" font-size="12" fill="#000" text-anchor="middle" >16</text>
<rect x="0" y="475" width="31" height="1" fill="#b4b4b4"/>
<text x="15.5" y="472" font-family="Liberation Sans" font-size="12" fill="#000" text-anchor="middle" >17</text>
<rect x="0" y="492" width="31" height="1" fill="#b4b4b4"/>
<text x="15.5" y="489" font-family="Liberation Sans" font-size="12" fill="#000" text-anchor="middle" >18</text>
<rect x="0" y="509" width="31" height="1" fill="#b4b4b4"/>
<text x="15.5" y="506" font-family="Liberation Sans" font-size="12" fill="#000" text-anchor="middle" >19</text>
<rect x="0" y="526" width="31" height="1" fill="#b4b4b4"/>
<text x="15.5" y="523" font-family="Liberation Sans" font-size="12" fill="#000" text-anchor="middle" >20</text>
<rect x="0" y="543" width="31" height="1" fill="#b4b4b4"/>
<text x="15.5" y="540" font-family="Liberation Sans" font-size="12" fill="#000" text-anchor="middle" >21</text>
<rect x="0" y="560" width="31" height="1" fill="#b4b4b4"/>
<text x="15.5" y="557" font-family="Liberation Sans" font-size="12" fill="#000" text-anchor="middle" >22</text>
<rect x="0" y="577" width="31" height="1" fill="#b4b4b4"/>
<text x="15.5" y="574" font-family="Liberation Sans" font-size="12" fill="#000" text-anchor="middle" >23</text>
<rect x="0" y="594" width="31" height="1" fill="#b4b4b4"/>
<text x="15.5" y="591" font-family="Liberation Sans" font-size="12" fill="#000" text-anchor="middle" >24</text>
<rect x="0" y="611" width="31" height="1" fill="#b4b4b4"/>
<text x="15.5" y="608" font-family="Liberation Sans" font-size="12" fill="#000" text-anchor="middle" >25</text>
<rect x="32" y="203" width="1289" height="1" fill="#d0d0d0"/>
<rect x="32" y="220" width="1289" height="1" fill="#d0d0d0"/>
<rect x="32" y="237" width="1289" height="1" fill="#d0d0d0"/>
<rect x="32" y="254" width="1289" height="1" fill="#d0d0d0"/>
<rect x="32" y="271" width="1289" height="1" fill="#d0d0d0"/>
<rect x="32" y="288" width="1289" height="1" fill="#d0d0d0"/>
<rect x="32" y="305" width="1289" height="1" fill="#d0d0d0"/>
<rect x="32" y="322" width="1289" height="1" fill="#d0d0d0"/>
<rect x="32" y="339" width="1289" height="1" fill="#d0d0d0"/>
<rect x="32" y="356" width="1289" height="1" fill="#d0d0d0"/>
<rect x="32" y="373" width="1289" height="1" fill="#d0d0d0"/>
<rect x="32" y="390" width="1289" height="1" fill="#d0d0d0"/>
<rect x="32" y="407" width="1289" height="1" fill="#d0d0d0"/>
<rect x="32" y="424" width="1289" height="1" fill="#d0d0d0"/>
<rect x="32" y="441" width="1289" height="1" fill="#d0d0d0"/>
<rect x="32" y="458" width="1289" height="1" fill="#d0d0d0"/>
<rect x="32" y="475" width="1289" height="1" fill="#d0d0d0"/>
<rect x="32" y="492" width="1289" height="1" fill="#d0d0d0"/>
<rect x="32" y="509" width="1289" height="1" fill="#d0d0d0"/>
<rect x="32" y="526" width="1289" height="1" fill="#d0d0d0"/>
<rect x="32" y="543" width="1289" height="1" fill="#d0d0d0"/>
<rect x="32" y="560" width="1289" height="1" fill="#d0d0d0"/>
<rect x="32" y="577" width="1289" height="1" fill="#d0d0d0"/>
<rect x="32" y="594" width="1289" height="1" fill="#d0d0d0"/>
<rect x="32" y="611" width="1289" height="1" fill="#d0d0d0"/>
<rect x="178" y="186" width="1" height="414" fill="#d0d0d0"/>
<rect x="360" y="186" width="1" height="414" fill="#d0d0d0"/>
<rect x="441" y="186" width="1" height="414" fill="#d0d0d0"/>
<rect x="490" y="186" width="1" height="414" fill="#d0d0d0"/>
<rect x="580" y="186" width="1" height="414" fill="#d0d0d0"/>
<clipPath id="clipB"><rect x="178" y="186" width="178" height="414"/></clipPath>
<text transform="translate(180,217) scale(0.93,1)" x="0" y="0" font-family="Liberation Sans" font-size="14" fill="#000">name</text>
<text transform="translate(362,217) scale(0.93,1)" x="0" y="0" font-family="Liberation Sans" font-size="14" fill="#000">orderID</text>
<text transform="translate(443,217) scale(0.93,1)" x="0" y="0" font-family="Liberation Sans" font-size="14" fill="#000">typeID</text>
<text transform="translate(492,217) scale(0.93,1)" x="0" y="0" font-family="Liberation Sans" font-size="14" fill="#000">o</text>
<text x="33" y="234" font-family="Liberation Serif" font-size="13" fill="#000" >Nuclear S</text>
<g clip-path="url(#clipB)">
<text transform="translate(180,234) scale(0.93,1)" x="0" y="0" font-family="Liberation Sans" font-size="14" fill="#000">Nuclear S</text>
</g>
<text transform="translate(440.2,234) scale(0.93,1)" x="0" y="0" font-family="Liberation Sans" font-size="14" fill="#000" text-anchor="end">7138531569</text>
<text transform="translate(488.5,234) scale(0.93,1)" x="0" y="0" font-family="Liberation Sans" font-size="14" fill="#000" text-anchor="end">179</text>
<path d="M355 221 h5 v5 z" fill="#c0739c"/>
<g clip-path="url(#clipB)">
<text transform="translate(180,251) scale(0.93,1)" x="0" y="0" font-family="Liberation Sans" font-size="14" fill="#000">Carbonized Lead S</text>
</g>
<text transform="translate(440.2,251) scale(0.93,1)" x="0" y="0" font-family="Liberation Sans" font-size="14" fill="#000" text-anchor="end">7138533225</text>
<text transform="translate(488.5,251) scale(0.93,1)" x="0" y="0" font-family="Liberation Sans" font-size="14" fill="#000" text-anchor="end">178</text>
<path d="M355 238 h5 v5 z" fill="#c0739c"/>
<g clip-path="url(#clipB)">
<text transform="translate(180,268) scale(0.93,1)" x="0" y="0" font-family="Liberation Sans" font-size="14" fill="#000">Proton S</text>
</g>
<text transform="translate(440.2,268) scale(0.93,1)" x="0" y="0" font-family="Liberation Sans" font-size="14" fill="#000" text-anchor="end">7138535530</text>
<text transform="translate(488.5,268) scale(0.93,1)" x="0" y="0" font-family="Liberation Sans" font-size="14" fill="#000" text-anchor="end">180</text>
<path d="M355 255 h5 v5 z" fill="#c0739c"/>
<g clip-path="url(#clipB)">
<text transform="translate(180,285) scale(0.93,1)" x="0" y="0" font-family="Liberation Sans" font-size="14" fill="#000">Depleted Uranium S</text>
</g>
<text transform="translate(440.2,285) scale(0.93,1)" x="0" y="0" font-family="Liberation Sans" font-size="14" fill="#000" text-anchor="end">7138537262</text>
<text transform="translate(488.5,285) scale(0.93,1)" x="0" y="0" font-family="Liberation Sans" font-size="14" fill="#000" text-anchor="end">181</text>
<path d="M355 272 h5 v5 z" fill="#c0739c"/>
<g clip-path="url(#clipB)">
<text transform="translate(180,302) scale(0.93,1)" x="0" y="0" font-family="Liberation Sans" font-size="14" fill="#000">Fusion S</text>
</g>
<text transform="translate(440.2,302) scale(0.93,1)" x="0" y="0" font-family="Liberation Sans" font-size="14" fill="#000" text-anchor="end">7139784573</text>
<text transform="translate(488.5,302) scale(0.93,1)" x="0" y="0" font-family="Liberation Sans" font-size="14" fill="#000" text-anchor="end">183</text>
<path d="M355 289 h5 v5 z" fill="#c0739c"/>
<g clip-path="url(#clipB)">
<text transform="translate(180,319) scale(0.93,1)" x="0" y="0" font-family="Liberation Sans" font-size="14" fill="#000">Inertial Stabilizers II</text>
</g>
<text transform="translate(440.2,319) scale(0.93,1)" x="0" y="0" font-family="Liberation Sans" font-size="14" fill="#000" text-anchor="end">7149396852</text>
<text transform="translate(488.5,319) scale(0.93,1)" x="0" y="0" font-family="Liberation Sans" font-size="14" fill="#000" text-anchor="end">1405</text>
<path d="M355 306 h5 v5 z" fill="#c0739c"/>
<g clip-path="url(#clipB)">
<text transform="translate(180,336) scale(0.93,1)" x="0" y="0" font-family="Liberation Sans" font-size="14" fill="#000">Nanofiber Internal Structure II</text>
</g>
<text transform="translate(440.2,336) scale(0.93,1)" x="0" y="0" font-family="Liberation Sans" font-size="14" fill="#000" text-anchor="end">7149397533</text>
<text transform="translate(488.5,336) scale(0.93,1)" x="0" y="0" font-family="Liberation Sans" font-size="14" fill="#000" text-anchor="end">2605</text>
<path d="M355 323 h5 v5 z" fill="#c0739c"/>
<g clip-path="url(#clipB)">
<text transform="translate(180,353) scale(0.93,1)" x="0" y="0" font-family="Liberation Sans" font-size="14" fill="#000">Probe</text>
</g>
<text transform="translate(440.2,353) scale(0.93,1)" x="0" y="0" font-family="Liberation Sans" font-size="14" fill="#000" text-anchor="end">7149633158</text>
<text transform="translate(488.5,353) scale(0.93,1)" x="0" y="0" font-family="Liberation Sans" font-size="14" fill="#000" text-anchor="end">586</text>
<path d="M355 340 h5 v5 z" fill="#c0739c"/>
<g clip-path="url(#clipB)">
<text transform="translate(180,370) scale(0.93,1)" x="0" y="0" font-family="Liberation Sans" font-size="14" fill="#000">Titanium Sabot S</text>
</g>
<text transform="translate(440.2,370) scale(0.93,1)" x="0" y="0" font-family="Liberation Sans" font-size="14" fill="#000" text-anchor="end">7154605430</text>
<text transform="translate(488.5,370) scale(0.93,1)" x="0" y="0" font-family="Liberation Sans" font-size="14" fill="#000" text-anchor="end">182</text>
<path d="M355 357 h5 v5 z" fill="#c0739c"/>
<text transform="translate(33,387) scale(0.93,1)" x="0" y="0" font-family="Liberation Sans" font-size="14" fill="#000">o</text>
<g clip-path="url(#clipB)">
<text transform="translate(180,387) scale(0.93,1)" x="0" y="0" font-family="Liberation Sans" font-size="14" fill="#000">Proton S</text>
</g>
<text transform="translate(440.2,387) scale(0.93,1)" x="0" y="0" font-family="Liberation Sans" font-size="14" fill="#000" text-anchor="end">7154606731</text>
<text transform="translate(488.5,387) scale(0.93,1)" x="0" y="0" font-family="Liberation Sans" font-size="14" fill="#000" text-anchor="end">180</text>
<path d="M355 374 h5 v5 z" fill="#c0739c"/>
<text transform="translate(33,404) scale(0.93,1)" x="0" y="0" font-family="Liberation Sans" font-size="14" fill="#000">o</text>
<g clip-path="url(#clipB)">
<text transform="translate(180,404) scale(0.93,1)" x="0" y="0" font-family="Liberation Sans" font-size="14" fill="#000">Nuclear S</text>
</g>
<text transform="translate(440.2,404) scale(0.93,1)" x="0" y="0" font-family="Liberation Sans" font-size="14" fill="#000" text-anchor="end">7154608246</text>
<text transform="translate(488.5,404) scale(0.93,1)" x="0" y="0" font-family="Liberation Sans" font-size="14" fill="#000" text-anchor="end">179</text>
<path d="M355 391 h5 v5 z" fill="#c0739c"/>
<g clip-path="url(#clipB)">
<text transform="translate(180,421) scale(0.93,1)" x="0" y="0" font-family="Liberation Sans" font-size="14" fill="#000">Phased Plasma S</text>
</g>
<text transform="translate(440.2,421) scale(0.93,1)" x="0" y="0" font-family="Liberation Sans" font-size="14" fill="#000" text-anchor="end">7154657354</text>
<text transform="translate(488.5,421) scale(0.93,1)" x="0" y="0" font-family="Liberation Sans" font-size="14" fill="#000" text-anchor="end">184</text>
<path d="M355 408 h5 v5 z" fill="#c0739c"/>
<text transform="translate(33,438) scale(0.93,1)" x="0" y="0" font-family="Liberation Sans" font-size="14" fill="#000">o</text>
<g clip-path="url(#clipB)">
<text transform="translate(180,438) scale(0.93,1)" x="0" y="0" font-family="Liberation Sans" font-size="14" fill="#000">Depleted Uranium S</text>
</g>
<text transform="translate(440.2,438) scale(0.93,1)" x="0" y="0" font-family="Liberation Sans" font-size="14" fill="#000" text-anchor="end">7154658371</text>
<text transform="translate(488.5,438) scale(0.93,1)" x="0" y="0" font-family="Liberation Sans" font-size="14" fill="#000" text-anchor="end">181</text>
<path d="M355 425 h5 v5 z" fill="#c0739c"/>
<g clip-path="url(#clipB)">
<text transform="translate(180,455) scale(0.93,1)" x="0" y="0" font-family="Liberation Sans" font-size="14" fill="#000">‘Vigilant’ Shield Command Bur</text>
</g>
<text transform="translate(440.2,455) scale(0.93,1)" x="0" y="0" font-family="Liberation Sans" font-size="14" fill="#000" text-anchor="end">7154660001</text>
<text transform="translate(488.5,455) scale(0.93,1)" x="0" y="0" font-family="Liberation Sans" font-size="14" fill="#000" text-anchor="end">88261</text>
<path d="M355 442 h5 v5 z" fill="#c0739c"/>
<path d="M356.5 446 l3.5 3 l-3.5 3 z" fill="#e00000" stroke="#000" stroke-width="1"/>
<g clip-path="url(#clipB)">
<text transform="translate(180,472) scale(0.93,1)" x="0" y="0" font-family="Liberation Sans" font-size="14" fill="#000">EMP S</text>
</g>
<text transform="translate(440.2,472) scale(0.93,1)" x="0" y="0" font-family="Liberation Sans" font-size="14" fill="#000" text-anchor="end">7154700275</text>
<text transform="translate(488.5,472) scale(0.93,1)" x="0" y="0" font-family="Liberation Sans" font-size="14" fill="#000" text-anchor="end">185</text>
<path d="M355 459 h5 v5 z" fill="#c0739c"/>
<text transform="translate(33,489) scale(0.93,1)" x="0" y="0" font-family="Liberation Sans" font-size="14" fill="#000">o</text>
<g clip-path="url(#clipB)">
<text transform="translate(180,489) scale(0.93,1)" x="0" y="0" font-family="Liberation Sans" font-size="14" fill="#000">Titanium Sabot S</text>
</g>
<text transform="translate(440.2,489) scale(0.93,1)" x="0" y="0" font-family="Liberation Sans" font-size="14" fill="#000" text-anchor="end">7154703345</text>
<text transform="translate(488.5,489) scale(0.93,1)" x="0" y="0" font-family="Liberation Sans" font-size="14" fill="#000" text-anchor="end">182</text>
<path d="M355 476 h5 v5 z" fill="#c0739c"/>
<rect x="32" y="219" width="148" height="2" fill="#0078d7" />
<rect x="32" y="237" width="148" height="2" fill="#0078d7" />
<rect x="178" y="219" width="2" height="20" fill="#0078d7" />
<rect x="175" y="235" width="6" height="6" fill="#0078d7" />
<rect x="0" y="600" width="1321" height="101" fill="#f0f0f0" />
<rect x="15" y="601" width="1306" height="15" fill="#cacaca" />
<path d="M9.5 605 l-4.5 3.5 l4.5 3.5" fill="none" stroke="#505050" stroke-width="1.9"/>
<path d="M12.5 621 v11" stroke="#000" stroke-width="1.3"/><path d="M19 622 l-5 5 l5 5 z" fill="#000"/>
<path d="M41 622 l-6 5 l6 5 z" fill="#000"/>
<path d="M56 622 l6 5 l-6 5 z" fill="#000"/>
<path d="M84.5 621 v11" stroke="#000" stroke-width="1.3"/><path d="M77.5 622 l5 5 l-5 5 z" fill="#000"/>
<path d="M103 627 h13 M109.5 620.5 v13" stroke="#000" stroke-width="2.6"/>
<rect x="127" y="616" width="65" height="21" fill="#ffffff" />
<rect x="127" y="636" width="65" height="3" fill="#6e6e6e" />
<text x="139.5" y="632" font-family="Liberation Sans" font-size="12" fill="#000" font-weight="700" textLength="39" lengthAdjust="spacingAndGlyphs" >Market</text>
<text x="204" y="632" font-family="Liberation Sans" font-size="12" fill="#000" textLength="101" lengthAdjust="spacingAndGlyphs" >Products_id_names</text>
<rect x="318" y="622" width="1" height="11" fill="#a0a0a0"/>
<text x="332.5" y="632" font-family="Liberation Sans" font-size="12" fill="#000" textLength="137.5" lengthAdjust="spacingAndGlyphs" >Products_id_names_cache</text>
<rect x="482" y="622" width="1" height="11" fill="#a0a0a0"/>
<rect x="0" y="639" width="1321" height="1" fill="#c8c8c8"/>
<circle cx="20" cy="658" r="9" fill="#f08080" stroke="#d84848"/><path d="M15.5 653.5 l9 9 M24.5 653.5 l-9 9" stroke="#fff" stroke-width="2"/>
<rect x="36.5" y="646.5" width="249" height="23" fill="#ffffff" stroke="#a8a8a8" stroke-width="1"/>
<rect x="268" y="647" width="17" height="22" fill="#e0e0e0" />
<rect x="268" y="647" width="1" height="22" fill="#a8a8a8"/>
<path d="M272 656 l4.5 4.5 l4.5 -4.5" fill="none" stroke="#606060"/>
<text x="39" y="663" font-family="Liberation Sans" font-size="12" fill="#8a8a8a" textLength="23" lengthAdjust="spacingAndGlyphs" >Find</text>
<path d="M294 663 l9 -9 l9 9 z" fill="none" stroke="#c4c4c4"/>
<path d="M327 654 h18 l-9 9 z" fill="none" stroke="#c4c4c4"/>
<text x="355.5" y="663" font-family="Liberation Sans" font-size="12" fill="#a8a8a8" textLength="39" lengthAdjust="spacingAndGlyphs" >Find All</text>
<rect x="403.5" y="651.5" width="12" height="12" fill="#ffffff" stroke="#333333" stroke-width="1"/>
<text x="420.5" y="663" font-family="Liberation Sans" font-size="12" fill="#000" textLength="92" lengthAdjust="spacingAndGlyphs" >Formatted Display</text>
<rect x="0" y="678" width="1321" height="1" fill="#c8c8c8"/>
<path d="M9.5 681.5 h13 l2.5 2.5 v13 h-15.5 z" fill="none" stroke="#d03030" stroke-width="1.3"/><rect x="12.5" y="682" width="9" height="5" fill="none" stroke="#d03030"/><rect x="13.5" y="691.5" width="7" height="5.5" fill="none" stroke="#d03030"/>
<rect x="30" y="681" width="1" height="16" fill="#c8c8c8"/>
<rect x="297" y="681" width="1" height="16" fill="#c8c8c8"/>
<rect x="0" y="700" width="1321" height="1" fill="#a4a4a4"/>
<rect x="0" y="701" width="1321" height="88" fill="#ffffff" />
<defs><linearGradient id="shd" x1="0" y1="0" x2="0" y2="1"><stop offset="0" stop-color="#000" stop-opacity="0.22"/><stop offset="0.3" stop-color="#000" stop-opacity="0.1"/><stop offset="0.65" stop-color="#000" stop-opacity="0.025"/><stop offset="1" stop-color="#000" stop-opacity="0"/></linearGradient></defs>
<defs><filter id="bbshadow" x="-20%" y="-100%" width="140%" height="300%"><feGaussianBlur stdDeviation="16"/></filter><clipPath id="dskclip"><rect x="0" y="701" width="497" height="88"/></clipPath></defs>
<g clip-path="url(#dskclip)"><rect x="222" y="772" width="1200" height="60" fill="#000" opacity="0.10" filter="url(#bbshadow)"/></g>
<defs><linearGradient id="dsk3" x1="0" y1="0" x2="0" y2="1"><stop offset="0" stop-color="#f9f9f9"/><stop offset="1" stop-color="#ececec"/></linearGradient></defs>
<rect x="455" y="701" width="42" height="74" fill="url(#dsk3)" />
<defs><linearGradient id="shr" x1="0" y1="0" x2="1" y2="0"><stop offset="0" stop-color="#000" stop-opacity="0"/><stop offset="1" stop-color="#000" stop-opacity="0.08"/></linearGradient></defs>
<rect x="480" y="701" width="17" height="74" fill="url(#shr)" />
<rect x="0" y="701" width="497" height="14" fill="url(#shd)" />
<rect x="215" y="775" width="1106" height="11" fill="#0288d1" />
<rect x="496" y="701" width="2" height="10" fill="#333333" />
<rect x="496" y="722" width="2" height="10" fill="#333333" />
<rect x="496" y="743" width="2" height="10" fill="#333333" />
<rect x="496" y="764" width="2" height="10" fill="#333333" />
<defs><filter id="dshadow" x="-5%" y="-5%" width="110%" height="110%"><feGaussianBlur stdDeviation="4"/></filter></defs>
<rect x="495" y="157" width="824" height="634" fill="#000" opacity="0.25" filter="url(#dshadow)"/>
<rect x="497" y="158" width="820" height="629" fill="#f0f0f0" />
<rect x="497" y="158" width="820" height="31" fill="#ffffff" />
<rect x="497.5" y="158.5" width="819" height="628" fill="none" stroke="#666666"/>
<text x="506" y="177.6" font-family="Liberation Sans" font-size="12" fill="#000" textLength="86" lengthAdjust="spacingAndGlyphs" >Function Wizard</text>
<path d="M1295.5 167.5 l10.5 10.5 M1306 167.5 l-10.5 10.5" stroke="#000" stroke-width="1.1"/>
<rect x="506" y="220" width="168" height="506" fill="#ffffff" />
<rect x="505.5" y="219.5" width="168" height="506" fill="#ffffff" stroke="#dadada"/>
<rect x="507.5" y="198.5" width="70" height="21" fill="#f0f0f0" stroke="#d9d9d9"/>
<rect x="577.5" y="196.5" width="69" height="23" fill="#ffffff" stroke="#d9d9d9"/>
<rect x="578" y="219" width="68" height="2" fill="#ffffff" />
<text x="516" y="213.5" font-family="Liberation Sans" font-size="12" fill="#000" textLength="52" lengthAdjust="spacingAndGlyphs" >Functions</text>
<text x="586" y="213.3" font-family="Liberation Sans" font-size="12" fill="#000" textLength="50" lengthAdjust="spacingAndGlyphs" >Structure</text>
<text x="514.3" y="241" font-family="Liberation Sans" font-size="12" fill="#000" textLength="45" lengthAdjust="spacingAndGlyphs" >Content:</text>
<rect x="514.5" y="250.5" width="152" height="467" fill="#ffffff" stroke="#828790"/>
<clipPath id="clipTree"><rect x="515" y="251" width="151" height="449"/></clipPath>
<g clip-path="url(#clipTree)">
<rect x="518.5" y="256.5" width="8" height="8" fill="#fff" stroke="#a0a0a0"/>
<rect x="520" y="260" width="5" height="1" fill="#3050a0"/>
<path d="M534.5 265.5 v-11.5 h5.5 l2 1.5 h5.5 v4" fill="#f8fafc" stroke="#ec8330" stroke-width="1.1"/><path d="M534.5 265.5 l2.5 -6.5 h12.5 l-2.5 6.5 z" fill="#f7dc8e" stroke="#ec8330" stroke-width="1.1"/>
<text x="555.3" y="265" font-family="Liberation Sans" font-size="12" fill="#000" textLength="128" lengthAdjust="spacingAndGlyphs" >XLOOKUP = &quot;Nuclear S&quot;</text>
<path d="M555.5 279.2 l4.5 4.8 l9 -10.8" fill="none" stroke="#1ea84a" stroke-width="1.9"/>
<text x="575.2" y="284" font-family="Liberation Sans" font-size="12" fill="#000" textLength="46.5" lengthAdjust="spacingAndGlyphs" >D3 = 179</text>
<path d="M555.5 298.2 l4.5 4.8 l9 -10.8" fill="none" stroke="#1ea84a" stroke-width="1.9"/>
<text x="575.2" y="303" font-family="Liberation Sans" font-size="12" fill="#000" textLength="128" lengthAdjust="spacingAndGlyphs" >$Products_id_names.B:B</text>
<path d="M555.5 317.2 l4.5 4.8 l9 -10.8" fill="none" stroke="#1ea84a" stroke-width="1.9"/>
<text x="575.2" y="322" font-family="Liberation Sans" font-size="12" fill="#000" textLength="128" lengthAdjust="spacingAndGlyphs" >$Products_id_names.C:C</text>
<path d="M555.5 336.2 l4.5 4.8 l9 -10.8" fill="none" stroke="#1ea84a" stroke-width="1.9"/>
<path d="M555.5 355.2 l4.5 4.8 l9 -10.8" fill="none" stroke="#1ea84a" stroke-width="1.9"/>
<text x="575.2" y="360" font-family="Liberation Sans" font-size="12" fill="#000" >0</text>
<path d="M555.5 374.2 l4.5 4.8 l9 -10.8" fill="none" stroke="#1ea84a" stroke-width="1.9"/>
<text x="575.2" y="379" font-family="Liberation Sans" font-size="12" fill="#000" >1</text>
</g>
<rect x="515" y="700" width="151" height="17" fill="#f0f0f0" />
<rect x="531" y="702" width="19" height="14" fill="#cdcdcd" />
<path d="M525.5 705 l-5 3.5 l5 3.5 M656 705 l5 3.5 l-5 3.5" fill="none" stroke="#454545" stroke-width="1.8"/>
<text x="682" y="212.4" font-family="Liberation Sans" font-size="12" fill="#000" textLength="51.5" lengthAdjust="spacingAndGlyphs" >XLOOKUP</text>
<text x="1060" y="211.6" font-family="Liberation Sans" font-size="12" fill="#000" textLength="81.5" lengthAdjust="spacingAndGlyphs" >Function result:</text>
<rect x="1155.5" y="196.5" width="152" height="21" fill="#ffffff" stroke="#7a7a7a" stroke-width="1"/>
<text x="1158.5" y="212" font-family="Liberation Sans" font-size="12" fill="#000" textLength="60" lengthAdjust="spacingAndGlyphs" >&quot;Nuclear S&quot;</text>
<text x="688" y="243" font-family="Liberation Sans" font-size="12" fill="#000" textLength="296.5" lengthAdjust="spacingAndGlyphs" >Extended vertical search and reference to indicated cells.</text>
<text x="688" y="303" font-family="Liberation Sans" font-size="12" fill="#000" textLength="136.5" lengthAdjust="spacingAndGlyphs" >Search criterion (required)</text>
<text x="688" y="330.3" font-family="Liberation Sans" font-size="11" fill="#000" textLength="198" lengthAdjust="spacingAndGlyphs" >The value to be found in the first column.</text>
<rect x="688.5" y="405.5" width="614" height="141" fill="#f0f0f0" stroke="#a0a0a0"/>
<text x="707.2" y="431" font-family="Liberation Sans" font-size="12" fill="#000" font-weight="700" textLength="86.5" lengthAdjust="spacingAndGlyphs" >Search criterion</text>
<rect x="801.5" y="413.5" width="37" height="25" fill="#e1e1e1" stroke="#adadad"/>
<g transform="translate(0,0)"><path d="M812.3 432.3 q1.6 1.8 3.2 0.2 q1 -1.2 1.6 -4.6 l1.6 -7.2 q0.8 -2.6 3.4 -1.6" fill="none" stroke="#2a8ad4" stroke-width="1.5" stroke-linecap="round"/><path d="M815.6 422.8 h4.6" stroke="#2a8ad4" stroke-width="1.2"/><path d="M820.2 426.3 q2.2 -0.4 3 2.4 l1.4 4.8 q0.6 0.8 1.8 0.2 M826.8 426 q-1.2 -0.4 -2.4 0.8 l-4.6 6.4 q-0.6 0.8 -1 0.4" fill="none" stroke="#2a8ad4" stroke-width="1.5" stroke-linecap="round"/></g>
<rect x="846.5" y="412.5" width="386" height="26" fill="#ffffff" stroke="#7a7a7a"/>
<text x="849.5" y="431" font-family="Liberation Sans" font-size="12" fill="#000" textLength="14.5" lengthAdjust="spacingAndGlyphs" >D3</text>
<rect x="1240.5" y="413.5" width="37" height="25" fill="#e1e1e1" stroke="#adadad"/>
<rect x="1253.7" y="420.6" width="10.6" height="5.8" rx="1" fill="#fff" stroke="#2e2e2e" stroke-width="1.2"/><rect x="1254.4" y="421.2" width="9.2" height="1.6" fill="#7a7a7a"/>
<path d="M1262.5 434 v-8 M1259.3 429.4 l3.2 -3.4 l3.2 3.4" fill="none" stroke="#2a8ad4" stroke-width="1.4"/>
<text x="724.1" y="465" font-family="Liberation Sans" font-size="12" fill="#000" font-weight="700" textLength="69.60000000000002" lengthAdjust="spacingAndGlyphs" >Search Array</text>
<rect x="801.5" y="447.5" width="37" height="25" fill="#e1e1e1" stroke="#adadad"/>
<g transform="translate(0,34)"><path d="M812.3 432.3 q1.6 1.8 3.2 0.2 q1 -1.2 1.6 -4.6 l1.6 -7.2 q0.8 -2.6 3.4 -1.6" fill="none" stroke="#2a8ad4" stroke-width="1.5" stroke-linecap="round"/><path d="M815.6 422.8 h4.6" stroke="#2a8ad4" stroke-width="1.2"/><path d="M820.2 426.3 q2.2 -0.4 3 2.4 l1.4 4.8 q0.6 0.8 1.8 0.2 M826.8 426 q-1.2 -0.4 -2.4 0.8 l-4.6 6.4 q-0.6 0.8 -1 0.4" fill="none" stroke="#2a8ad4" stroke-width="1.5" stroke-linecap="round"/></g>
<rect x="846.5" y="446.5" width="386" height="26" fill="#ffffff" stroke="#7a7a7a"/>
<text x="849.5" y="465" font-family="Liberation Sans" font-size="12" fill="#000" textLength="127.5" lengthAdjust="spacingAndGlyphs" >$Products_id_names.B:B</text>
<rect x="1240.5" y="447.5" width="37" height="25" fill="#e1e1e1" stroke="#adadad"/>
<rect x="1253.7" y="454.6" width="10.6" height="5.8" rx="1" fill="#fff" stroke="#2e2e2e" stroke-width="1.2"/><rect x="1254.4" y="455.2" width="9.2" height="1.6" fill="#7a7a7a"/>
<path d="M1262.5 468 v-8 M1259.3 463.4 l3.2 -3.4 l3.2 3.4" fill="none" stroke="#2a8ad4" stroke-width="1.4"/>
<text x="727.5" y="499" font-family="Liberation Sans" font-size="12" fill="#000" font-weight="700" textLength="66.20000000000005" lengthAdjust="spacingAndGlyphs" >Result Array</text>
<rect x="801.5" y="481.5" width="37" height="25" fill="#e1e1e1" stroke="#adadad"/>
<g transform="translate(0,68)"><path d="M812.3 432.3 q1.6 1.8 3.2 0.2 q1 -1.2 1.6 -4.6 l1.6 -7.2 q0.8 -2.6 3.4 -1.6" fill="none" stroke="#2a8ad4" stroke-width="1.5" stroke-linecap="round"/><path d="M815.6 422.8 h4.6" stroke="#2a8ad4" stroke-width="1.2"/><path d="M820.2 426.3 q2.2 -0.4 3 2.4 l1.4 4.8 q0.6 0.8 1.8 0.2 M826.8 426 q-1.2 -0.4 -2.4 0.8 l-4.6 6.4 q-0.6 0.8 -1 0.4" fill="none" stroke="#2a8ad4" stroke-width="1.5" stroke-linecap="round"/></g>
<rect x="846.5" y="480.5" width="386" height="26" fill="#ffffff" stroke="#7a7a7a"/>
<text x="849.5" y="499" font-family="Liberation Sans" font-size="12" fill="#000" textLength="127.5" lengthAdjust="spacingAndGlyphs" >$Products_id_names.C:C</text>
<rect x="1240.5" y="481.5" width="37" height="25" fill="#e1e1e1" stroke="#adadad"/>
<rect x="1253.7" y="488.6" width="10.6" height="5.8" rx="1" fill="#fff" stroke="#2e2e2e" stroke-width="1.2"/><rect x="1254.4" y="489.2" width="9.2" height="1.6" fill="#7a7a7a"/>
<path d="M1262.5 502 v-8 M1259.3 497.4 l3.2 -3.4 l3.2 3.4" fill="none" stroke="#2a8ad4" stroke-width="1.4"/>
<text x="696.7" y="533" font-family="Liberation Sans" font-size="12" fill="#000" textLength="97.0" lengthAdjust="spacingAndGlyphs" >Result if not found</text>
<rect x="801.5" y="515.5" width="37" height="25" fill="#e1e1e1" stroke="#adadad"/>
<g transform="translate(0,102)"><path d="M812.3 432.3 q1.6 1.8 3.2 0.2 q1 -1.2 1.6 -4.6 l1.6 -7.2 q0.8 -2.6 3.4 -1.6" fill="none" stroke="#2a8ad4" stroke-width="1.5" stroke-linecap="round"/><path d="M815.6 422.8 h4.6" stroke="#2a8ad4" stroke-width="1.2"/><path d="M820.2 426.3 q2.2 -0.4 3 2.4 l1.4 4.8 q0.6 0.8 1.8 0.2 M826.8 426 q-1.2 -0.4 -2.4 0.8 l-4.6 6.4 q-0.6 0.8 -1 0.4" fill="none" stroke="#2a8ad4" stroke-width="1.5" stroke-linecap="round"/></g>
<rect x="846.5" y="514.5" width="386" height="26" fill="#ffffff" stroke="#7a7a7a"/>
<rect x="1240.5" y="515.5" width="37" height="25" fill="#e1e1e1" stroke="#adadad"/>
<rect x="1253.7" y="522.6" width="10.6" height="5.8" rx="1" fill="#fff" stroke="#2e2e2e" stroke-width="1.2"/><rect x="1254.4" y="523.2" width="9.2" height="1.6" fill="#7a7a7a"/>
<path d="M1262.5 536 v-8 M1259.3 531.4 l3.2 -3.4 l3.2 3.4" fill="none" stroke="#2a8ad4" stroke-width="1.4"/>
<rect x="1285" y="406" width="1.5" height="140" fill="#fafafa" />
<rect x="1286.5" y="406" width="15.5" height="140" fill="#f0f0f0" />
<rect x="1286.5" y="423" width="14.5" height="70" fill="#cdcdcd" />
<path d="M1290.3 417.5 l3.2 -5 l3.2 5 M1290.3 535.5 l3.2 5 l3.2 -5" fill="none" stroke="#454545" stroke-width="1.8"/>
<text x="682.5" y="636.8" font-family="Liberation Sans" font-size="12" fill="#000" textLength="46" lengthAdjust="spacingAndGlyphs" >Formula:</text>
<text x="1108" y="633.8" font-family="Liberation Sans" font-size="12" fill="#000" textLength="35" lengthAdjust="spacingAndGlyphs" >Result:</text>
<rect x="1156.5" y="618.5" width="152" height="21" fill="#ffffff" stroke="#0078d7"/>
<text x="1159.5" y="634.5" font-family="Liberation Sans" font-size="12" fill="#000" textLength="60" lengthAdjust="spacingAndGlyphs" >&quot;Nuclear S&quot;</text>
<rect x="682.5" y="646.5" width="626" height="79" fill="#ffffff" stroke="#a0a0a0"/>
<text x="685.5" y="660.2" font-family="Liberation Sans" font-size="12" fill="#000" textLength="366" lengthAdjust="spacingAndGlyphs" >=XLOOKUP(D3;$Products_id_names.B:B;$Products_id_names.C:C; ;0;1)</text>
<rect x="1292" y="647" width="16" height="78" fill="#f0f0f0" />
<rect x="1293" y="664" width="14" height="44" fill="#cdcdcd" />
<path d="M1296.8 658.5 l3.2 -5 l3.2 5 M1296.8 714 l3.2 5 l3.2 -5" fill="none" stroke="#454545" stroke-width="1.8"/>
<rect x="510.5" y="752.5" width="12" height="12" fill="#ffffff" stroke="#333333" stroke-width="1"/>
<text x="527" y="764" font-family="Liberation Sans" font-size="12" fill="#000" textLength="28" lengthAdjust="spacingAndGlyphs" >Array</text>
<rect x="602.5" y="745.5" width="82" height="27" fill="#e1e1e1" stroke="#adadad"/>
<text x="630.5" y="763.5" font-family="Liberation Sans" font-size="12" fill="#000" textLength="26" lengthAdjust="spacingAndGlyphs" >Help</text>
<rect x="947.5" y="745.5" width="82" height="27" fill="#cccccc" stroke="#bfbfbf"/>
<text x="971.0" y="763.5" font-family="Liberation Sans" font-size="12" fill="#a0a0a0" textLength="35" lengthAdjust="spacingAndGlyphs" >&lt; Back</text>
<rect x="1038.5" y="745.5" width="82" height="27" fill="#cccccc" stroke="#bfbfbf"/>
<text x="1062.5" y="763.5" font-family="Liberation Sans" font-size="12" fill="#a0a0a0" textLength="34" lengthAdjust="spacingAndGlyphs" >Next &gt;</text>
<rect x="1130" y="746" width="81" height="26" fill="#e1e1e1" stroke="#0078d7" stroke-width="2"/>
<text x="1162.0" y="763.5" font-family="Liberation Sans" font-size="12" fill="#000" textLength="17" lengthAdjust="spacingAndGlyphs" >OK</text>
<rect x="1220.5" y="745.5" width="82" height="27" fill="#e1e1e1" stroke="#adadad"/>
<text x="1243.0" y="763.5" font-family="Liberation Sans" font-size="12" fill="#000" textLength="37" lengthAdjust="spacingAndGlyphs" >Cancel</text>
<defs><linearGradient id="shrr" x1="0" y1="0" x2="1" y2="0"><stop offset="0" stop-color="#000" stop-opacity="0.42"/><stop offset="1" stop-color="#000" stop-opacity="0.18"/></linearGradient></defs>
<rect x="1317" y="700" width="4" height="75" fill="url(#shrr)" />
<rect x="1317" y="159" width="4" height="9" fill="#e4e4e4" />
<rect x="1317" y="168" width="4" height="18" fill="#d4d4d4" />
<rect x="1317" y="168" width="4" height="1" fill="#a0a0a0"/>
<rect x="1318" y="225" width="1" height="8" fill="#1f5fa8" />
<rect x="1319" y="225" width="2" height="8" fill="#3a3a3a" />
<rect x="1318" y="242" width="1" height="8" fill="#1f5fa8" />
<rect x="1319" y="242" width="2" height="8" fill="#3a3a3a" />
<rect x="1318" y="259" width="1" height="8" fill="#1f5fa8" />
<rect x="1319" y="259" width="2" height="8" fill="#3a3a3a" />
<rect x="1318" y="276" width="1" height="8" fill="#1f5fa8" />
<rect x="1319" y="276" width="2" height="8" fill="#3a3a3a" />
<rect x="1318" y="293" width="1" height="8" fill="#1f5fa8" />
<rect x="1319" y="293" width="2" height="8" fill="#3a3a3a" />
<rect x="1318" y="310" width="1" height="8" fill="#1f5fa8" />
<rect x="1319" y="310" width="2" height="8" fill="#3a3a3a" />
<rect x="1318" y="327" width="1" height="8" fill="#1f5fa8" />
<rect x="1319" y="327" width="2" height="8" fill="#3a3a3a" />
<rect x="1318" y="344" width="1" height="8" fill="#1f5fa8" />
<rect x="1319" y="344" width="2" height="8" fill="#3a3a3a" />
<rect x="1317" y="361" width="2" height="8" fill="#5a5a5a" />
<rect x="1317" y="378" width="2" height="8" fill="#5a5a5a" />
<rect x="1317" y="395" width="2" height="8" fill="#5a5a5a" />
<rect x="1317" y="412" width="2" height="8" fill="#5a5a5a" />
<rect x="1317" y="429" width="2" height="8" fill="#5a5a5a" />
<rect x="1317" y="446" width="2" height="8" fill="#5a5a5a" /></svg></body></html>
